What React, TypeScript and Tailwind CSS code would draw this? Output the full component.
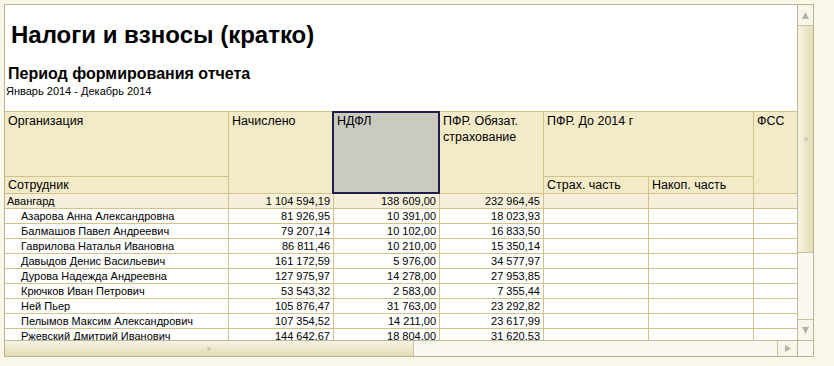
import React from "react";

const rows = [
  { name: "Авангард", group: true, sum: "1 104 594,19", ndfl: "138 609,00", pfr: "232 964,45" },
  { name: "Азарова Анна Александровна", sum: "81 926,95", ndfl: "10 391,00", pfr: "18 023,93" },
  { name: "Балмашов Павел Андреевич", sum: "79 207,14", ndfl: "10 102,00", pfr: "16 833,50" },
  { name: "Гаврилова Наталья Ивановна", sum: "86 811,46", ndfl: "10 210,00", pfr: "15 350,14" },
  { name: "Давыдов Денис Васильевич", sum: "161 172,59", ndfl: "5 976,00", pfr: "34 577,97" },
  { name: "Дурова Надежда Андреевна", sum: "127 975,97", ndfl: "14 278,00", pfr: "27 953,85" },
  { name: "Крючков Иван Петрович", sum: "53 543,32", ndfl: "2 583,00", pfr: "7 355,44" },
  { name: "Ней Пьер", sum: "105 876,47", ndfl: "31 763,00", pfr: "23 292,82" },
  { name: "Пелымов Максим Александрович", sum: "107 354,52", ndfl: "14 211,00", pfr: "23 617,99" },
  { name: "Ржевский Дмитрий Иванович", sum: "144 642,67", ndfl: "18 804,00", pfr: "31 620,53" },
];

const Arrow = ({ dir }: { dir: "up" | "down" | "right" }) => {
  const pts =
    dir === "up" ? "3.5,0 7,7 0,7" : dir === "down" ? "0,0 7,0 3.5,7" : "0,0 6,3.5 0,7";
  return (
    <svg width={dir === "right" ? 6 : 7} height={7} viewBox={dir === "right" ? "0 0 6 7" : "0 0 7 7"}>
      <polygon points={pts} fill="#b3b1a2" />
    </svg>
  );
};

const Grip = () => <div className="w-[4px] h-[4px] rounded-full bg-[#cfcbb8]" />;

function Header() {
  return (
    <div className="flex h-[83px] border-y border-[#d3c38a] bg-[#f3eac7] text-[12.5px] leading-[16px] text-black">
      <div className="w-[224px] flex flex-col border-r border-[#d3c38a]">
        <div className="h-[65px] border-b border-[#d3c38a] pl-[3px] pt-[1px]">Организация</div>
        <div className="flex-1 pl-[3px]">Сотрудник</div>
      </div>
      <div className="w-[105px] border-r border-[#d3c38a] pl-[3px] pt-[1px]">Начислено</div>
      <div className="w-[106px] border-r border-[#d3c38a] relative">
        <div className="absolute left-[-2px] right-[-1px] top-[-1px] bottom-[-1px] border-2 border-[#1c1e4c] bg-[#cbcac1] pl-[3px]">
          НДФЛ
        </div>
      </div>
      <div className="w-[104px] border-r border-[#d3c38a] pl-[3px] pt-[1px]">
        ПФР. Обязат.
        <br />
        страхование
      </div>
      <div className="w-[210px] flex flex-col border-r border-[#d3c38a]">
        <div className="h-[65px] border-b border-[#d3c38a] pl-[3px] pt-[1px]">ПФР. До 2014 г</div>
        <div className="flex-1 flex">
          <div className="w-[105px] border-r border-[#d3c38a] pl-[3px]">Страх. часть</div>
          <div className="flex-1 pl-[3px]">Накоп. часть</div>
        </div>
      </div>
      <div className="flex-1 pl-[3px] pt-[1px]">ФСС</div>
    </div>
  );
}

function Row({ r }: { r: (typeof rows)[number] }) {
  return (
    <div
      className={`flex h-[15px] shrink-0 border-b border-[#d3c38a] text-[11px] leading-[14px] text-black ${
        r.group ? "bg-[#f6f0da]" : "bg-white"
      }`}
    >
      <div className={`w-[224px] border-r border-[#d3c38a] whitespace-nowrap ${r.group ? "pl-[2px]" : "pl-[16px]"}`}>
        {r.name}
      </div>
      <div className="w-[105px] border-r border-[#d3c38a] text-right pr-[3px]">{r.sum}</div>
      <div className="w-[106px] border-r border-[#d3c38a] text-right pr-[3px]">{r.ndfl}</div>
      <div className="w-[104px] border-r border-[#d3c38a] text-right pr-[3px]">{r.pfr}</div>
      <div className="w-[105px] border-r border-[#d3c38a]" />
      <div className="w-[105px] border-r border-[#d3c38a]" />
      <div className="flex-1" />
    </div>
  );
}

export default function App() {
  return (
    <div className="w-[834px] h-[366px] bg-[#fbf8e9] pt-[4px] pl-[4px] font-['Liberation_Sans',Arial,sans-serif] overflow-hidden">
      <div className="w-[810px] h-[353px] border border-[#bab393] flex">
        <div className="w-[792px] flex flex-col">
          <div className="h-[335px] overflow-hidden bg-white flex flex-col">
            <div className="h-[106px] shrink-0 text-black">
              <div className="pt-[18px] pl-[6px] text-[24px] leading-[24px] font-bold whitespace-nowrap">
                Налоги и взносы (кратко)
              </div>
              <div className="mt-[19px] pl-[3px] text-[16px] leading-[16px] font-bold whitespace-nowrap">
                Период формирования отчета
              </div>
              <div className="mt-[4px] pl-[1px] text-[11px] leading-[11px] whitespace-nowrap">
                Январь 2014 - Декабрь 2014
              </div>
            </div>
            <Header />
            {rows.map((r, i) => (
              <Row key={i} r={r} />
            ))}
          </div>
          <div className="h-[16px] border-t border-[#bdb698] flex bg-[#faf8ef]">
            <div className="w-[409px] border-r border-[#c9c2a0] bg-gradient-to-b from-[#f7f4e4] to-[#e4dcb2] flex items-center justify-center">
              <Grip />
            </div>
            <div className="flex-1" />
            <div className="w-[20px] border-l border-[#c9c2a0] bg-[#f8f6ea] flex items-center justify-center">
              <Arrow dir="right" />
            </div>
          </div>
        </div>
        <div className="w-[16px] border-l border-[#bdb698] flex flex-col bg-[#faf8ef]">
          <div className="h-[21px] border-b border-[#c9c2a0] bg-[#f8f6ea] flex items-center justify-center">
            <Arrow dir="up" />
          </div>
          <div className="h-[227px] border-b border-[#c9c2a0] bg-gradient-to-r from-[#f7f4e4] to-[#e4dcb2] flex items-center justify-center">
            <Grip />
          </div>
          <div className="flex-1" />
          <div className="h-[21px] border-t border-[#c9c2a0] bg-[#f8f6ea] flex items-center justify-center">
            <Arrow dir="down" />
          </div>
          <div className="h-[16px] border-t border-[#bdb698] bg-[#faf8ef]" />
        </div>
      </div>
    </div>
  );
}
